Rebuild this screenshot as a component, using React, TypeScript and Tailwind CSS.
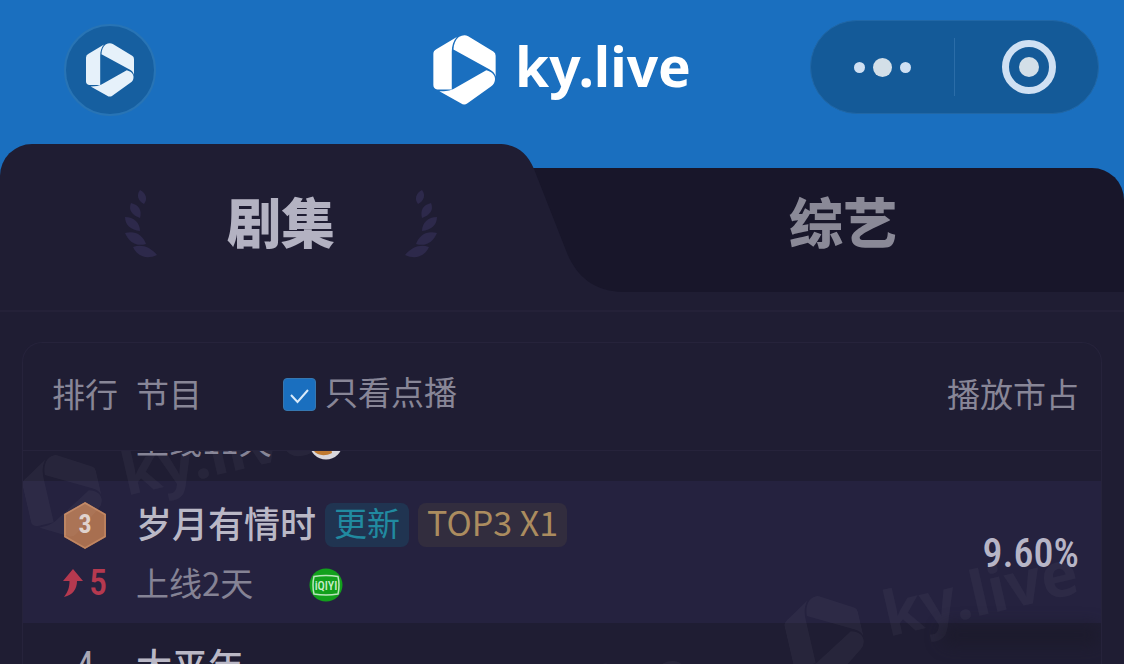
import { useState } from "react"
import type { ReactNode } from "react"

type Show = {
    id: number
    rank: ReactNode
    trend?: number
    title?: string
    tags?: { label: string; tone: "update" | "top" }[]
    online: string
    platform?: ReactNode
    share?: string
    active?: boolean
}

const LogoMark = ({ className }: { className?: string }) => (
    <svg viewBox="0 0 186 209" className={className} fill="currentColor" aria-hidden="true">
        <path d="M10 42 L70 6 C60 17 55 32 55 50 V163 H12 Q0 160 0 149 V56 Q0 47 10 42Z" />
        <path d="M76 6 Q92 -4 104 4 L179 49 Q186 53 186 62 V124 C184 114 177 107 167 102 L60 43 C61 27 66 14 76 6Z" />
        <path d="M18 168 C38 168 50 166 60 161 L158 105 C172 109 184 117 184 130 Q185 145 172 154 L102 204 Q92 211 82 204Z" />
    </svg>
)

const Laurel = ({ className }: { className?: string }) => (
    <svg viewBox="0 0 32 68" className={className} fill="currentColor" aria-hidden="true">
        <path d="M15 0 C21 3 23 9 19 14 C13 11 11 5 15 0Z" />
        <path d="M6 13 C14 15 17 20 15 28 C7 25 3 20 6 13Z" />
        <path d="M0 27 C9 27 15 33 15 41 C6 40 0 35 0 27Z" />
        <path d="M0 43 C10 40 18 45 21 54 C11 57 4 52 0 43Z" />
        <path d="M8 57 C17 54 25 57 32 65 C21 70 12 66 8 57Z" />
    </svg>
)

const RankBadge = ({ value }: { value: number }) => (
    <span className="relative flex h-12 w-11 items-center justify-center">
        <svg viewBox="0 0 44 48" className="absolute inset-0 h-full w-full" aria-hidden="true">
            <path d="M22 1 L43 13 V36 L22 48 L1 36 V13Z" fill="#a86f50" />
            <path d="M22 2 L42 13.500 V35.500 L22 47 L2 35.500 V13.500Z" fill="none" stroke="#c08662" strokeWidth="1.500" />
        </svg>
        <span className="relative font-['Roboto_Condensed','Roboto'] text-[26px] font-bold text-[#dfd2cd]">{value}</span>
    </span>
)

const IqiyiIcon = () => (
    <svg viewBox="0 0 34 34" className="size-[34px]" role="img" aria-label="iQIYI">
        <circle cx="17" cy="17" r="16.500" fill="#12a01c" />
        <path d="M5 8.500 Q17 6.500 29 8.500 Q31 17 29 26 Q17 28 5 26 Q3 17 5 8.500Z" fill="none" stroke="#b9e5bb" strokeWidth="1.500" />
        <text x="17" y="21.500" textAnchor="middle" fill="#c8ecc9" className="font-['Roboto_Condensed','Roboto'] text-[12px] font-medium">iQIYI</text>
    </svg>
)

const MangoIcon = () => (
    <svg viewBox="0 0 34 34" className="size-[34px]" aria-hidden="true">
        <circle cx="17" cy="17" r="16.500" fill="#d9d7dc" />
        <path d="M5 8 C14 12 22 19 23 27 C15 31 8 29 5 25Z" fill="#c07a30" />
    </svg>
)

const UpArrow = () => (
    <svg viewBox="0 0 20 28" className="h-7 w-5" fill="#b5394f" aria-hidden="true">
        <path d="M10 0 L20 12 H14 C14 20 10 26 1 28 C5 23 6.500 18 6.500 12 H0Z" />
    </svg>
)

const Watermark = ({ className }: { className: string }) => (
    <div className={`pointer-events-none absolute flex -rotate-13 items-center gap-6 text-white/4 ${className}`} aria-hidden="true">
        <LogoMark className="h-[84px] w-[75px]" />
        <span className="pb-5 font-['Noto_Sans'] text-[62px] leading-[84px] font-bold">ky.live</span>
    </div>
)

const Tag = ({ label, tone }: { label: string; tone: "update" | "top" }) => (
    <span className={`flex h-11 items-center rounded-lg px-[9px] pb-1.5 leading-9 whitespace-nowrap ${tone === "update" ? "bg-[#203451] text-[33px] text-[#218aa0]" : "bg-[#322d3e] text-[34px] text-[#ab8c5f]"}`}>
        {label}
    </span>
)

const shows: Show[] = [
    { id: 2, rank: null, online: "上线11天", platform: <MangoIcon /> },
    {
        id: 3,
        rank: <RankBadge value={3} />,
        trend: 5,
        title: "岁月有情时",
        tags: [{ label: "更新", tone: "update" }, { label: "TOP3 X1", tone: "top" }],
        online: "上线2天",
        platform: <IqiyiIcon />,
        share: "9.60%",
        active: true,
    },
    { id: 4, rank: <span className="font-['Roboto_Condensed','Roboto'] text-[38px]">4</span>, title: "太平年", online: "" },
]

const ShowRow = ({ show, clipped }: { show: Show; clipped?: boolean }) => {
    // the first row is scrolled under the header, only its lower edge stays visible
    const cell = clipped ? "flex h-[30px] flex-col justify-end overflow-hidden" : ""
    return <tr className={show.active ? "bg-[#25223f]" : ""}>
        <td className="p-0 pl-[29px]">
            <div className={cell}>
                <div className="flex h-[142px] shrink-0 flex-col items-center gap-4 pt-[22px]">
                    <div className="flex h-11 items-center text-[#a9a7b6]">{show.rank}</div>
                    {show.trend && <div className="flex h-11 items-center gap-1.5 pb-1 font-['Roboto_Condensed','Roboto'] text-[36px] font-medium text-[#b5394f]">
                        <UpArrow />
                        {show.trend}
                    </div>}
                </div>
            </div>
        </td>
        <td className="p-0 pl-[18px]">
            <div className={cell}>
                <div className="flex h-[142px] shrink-0 flex-col gap-4 pt-[22px]">
                    <div className="flex h-11 items-center gap-[9px]">
                        <span className="pb-1.5 text-[36px] leading-11 font-medium whitespace-nowrap text-[#bab8c6]">{show.title}</span>
                        {show.tags?.map((t) => <Tag key={t.label} {...t} />)}
                    </div>
                    <div className="flex h-11 items-center">
                        <span className="w-[173px] pb-1.5 text-[33px] leading-11 text-[#858395]">{show.online}</span>
                        {show.platform}
                    </div>
                </div>
            </div>
        </td>
        <td className="p-0 pt-1 pr-[22px] text-right font-['Roboto_Condensed','Roboto'] text-[40px] font-medium text-[#b7b5c6]">
            {show.share}
        </td>
    </tr>
}

const Header = () => (
    <header className="grid h-36 grid-cols-[1fr_auto_1fr] items-center px-[25px] pb-1">
        <button aria-label="主页" className="ml-[39px] flex size-[92px] items-center justify-center rounded-full border-2 border-[#2874b5] bg-[#165fa0] text-[#e6f1fa]">
            <LogoMark className="h-[54px] w-12" />
        </button>
        <div className="flex items-center gap-[19px] text-white">
            <LogoMark className="h-[70px] w-[63px]" />
            <span className="pb-2 font-['Noto_Sans'] text-[55px] leading-[64px] font-bold">ky.live</span>
        </div>
        <div className="mb-1.5 flex h-[94px] w-[289px] items-center justify-self-end rounded-full border border-[#2167a6] bg-[#145a98] text-[#cfe0f3]">
            <button aria-label="更多" className="flex w-1/2 items-center justify-center gap-2">
                <span className="size-[11px] rounded-full bg-current" />
                <span className="size-[19px] rounded-full bg-[#d3dfe8]" />
                <span className="size-[11px] rounded-full bg-current" />
            </button>
            <span className="h-[58px] w-px bg-[#2b6da8]" />
            <button aria-label="关闭" className="flex w-1/2 items-center justify-center pl-1">
                <span className="flex size-[54px] items-center justify-center rounded-full border-[7px] border-current">
                    <span className="size-5 rounded-full bg-[#d3dfe8]" />
                </span>
            </button>
        </div>
    </header>
)

const Tabs = () => {
    const [tab, setTab] = useState("剧集")
    return <nav className="relative grid h-[148px] grid-cols-2">
        <span className="absolute top-6 right-0 bottom-0 left-8 rounded-tr-[32px] bg-[#18162a]" />
        <button onClick={() => setTab("剧集")} aria-pressed={tab === "剧集"} className="relative flex items-center justify-center pt-3">
            <span className="absolute inset-y-0 right-[72px] left-0 rounded-tl-[32px] bg-[#1f1d33]" />
            <svg viewBox="0 0 142 148" className="absolute top-0 right-[-69px] h-full w-[142px]" fill="#1f1d33" aria-hidden="true">
                <path d="M0 0 H9 C27 0 38 8 45 25 L78 109 C88 133 105 147 134 148 H0Z" />
            </svg>
            <span className="relative flex items-center gap-[70px]">
                <Laurel className="h-[68px] w-8 text-[#2d294b]" />
                <span className="pb-1.5 text-[54px] leading-[68px] font-black text-[#b3b2c2]">剧集</span>
                <Laurel className="h-[68px] w-8 -scale-x-100 text-[#2d294b]" />
            </span>
        </button>
        <button onClick={() => setTab("综艺")} aria-pressed={tab === "综艺"} className="relative flex items-center justify-center pt-3">
            <span className="pb-1.5 text-[54px] leading-[68px] font-black text-[#8a8997]">综艺</span>
        </button>
    </nav>
}

export default function App() {
    const [onDemand, setOnDemand] = useState(true)
    return <div className="h-screen overflow-hidden bg-[#1f1d33] font-['Noto_Sans_CJK_SC',sans-serif]">
        <div className="bg-[#1a6fbf]">
            <Header />
            <Tabs />
        </div>
        <div className="h-5 border-b-2 border-[#242138]" />
        <main className="relative mx-[22px] mt-[30px] overflow-hidden rounded-t-[20px] border border-b-0 border-[#26233b]">
            <table className="w-full table-fixed border-collapse">
                <thead className="text-[33px] leading-11 text-[#888697]">
                    <tr className="h-[107px] border-b border-[#26233b]">
                        <th className="w-[95px] p-0 pb-1.5 pl-[29px] text-left font-normal whitespace-nowrap">排行</th>
                        <th className="p-0 pb-1 pl-[18px] font-normal">
                            <div className="flex items-center">
                                <span className="mr-[81px] pb-0.5">节目</span>
                                <label className="flex items-center gap-[9px]">
                                    <span className="relative flex size-[33px]">
                                        <input type="checkbox" checked={onDemand} onChange={(e) => setOnDemand(e.target.checked)} className="size-full appearance-none rounded-[4px] border border-[#3677b0] checked:bg-[#1a6fbf]" />
                                        {onDemand && <svg viewBox="0 0 33 33" className="pointer-events-none absolute inset-0" fill="none" stroke="#d9eafa" strokeWidth="2" aria-hidden="true">
                                            <path d="M8 17 L14.500 24 L25 12" />
                                        </svg>}
                                    </span>
                                    <span className="pb-1.5">只看点播</span>
                                </label>
                            </div>
                        </th>
                        <th className="w-[260px] p-0 pr-[22px] pb-1.5 text-right font-normal">播放市占</th>
                    </tr>
                </thead>
                <tbody>
                    {shows.map((s, i) => <ShowRow key={s.id} show={s} clipped={i === 0} />)}
                </tbody>
            </table>
            <div className="pointer-events-none absolute inset-x-0 top-[108px] bottom-0 overflow-hidden">
                <Watermark className="-top-8 left-0" />
                <Watermark className="top-[109px] left-[762px]" />
                <Watermark className="top-[208px] left-[374px]" />
                <span className="absolute top-[174px] right-0 h-5 w-40 rounded-full bg-[#1b1a2a]/70 blur-sm" />
            </div>
        </main>
    </div>
}
